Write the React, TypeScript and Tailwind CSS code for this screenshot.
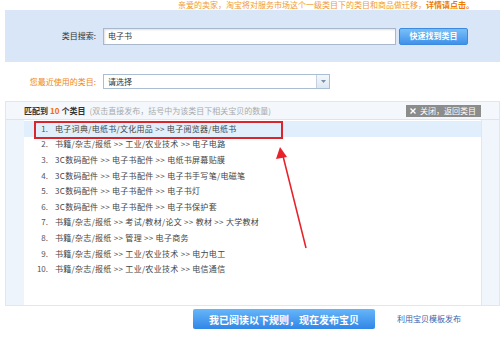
import React from "react";

const rows: string[] = [
  "电子词典/电纸书/文化用品 >> 电子阅览器/电纸书",
  "书籍/杂志/报纸 >> 工业/农业技术 >> 电子电路",
  "3C数码配件 >> 电子书配件 >> 电纸书屏幕贴膜",
  "3C数码配件 >> 电子书配件 >> 电子书手写笔/电磁笔",
  "3C数码配件 >> 电子书配件 >> 电子书灯",
  "3C数码配件 >> 电子书配件 >> 电子书保护套",
  "书籍/杂志/报纸 >> 考试/教材/论文 >> 教材 >> 大学教材",
  "书籍/杂志/报纸 >> 管理 >> 电子商务",
  "书籍/杂志/报纸 >> 工业/农业技术 >> 电力电工",
  "书籍/杂志/报纸 >> 工业/农业技术 >> 电信通信",
];

export default function App() {
  return (
    <div
      className="relative w-[500px] h-[343px] overflow-hidden bg-white text-[8px] text-[#333]"
      style={{ fontFamily: '"Noto Sans CJK SC", "Noto Sans", sans-serif' }}
    >
      {/* notice */}
      <div className="h-[10px] pl-[178px] leading-[10px] text-[#f39a2c] whitespace-nowrap">
        亲爱的卖家，淘宝将对服务市场这个一级类目下的类目和商品做迁移，
        <span className="font-bold text-[#ee7a00]">详情请点击。</span>
      </div>

      {/* search panel */}
      <div className="ml-[5px] h-[52px] bg-[#d9e6f7] flex items-center">
        <div className="w-[92px] text-right pr-[1px] text-[#333]">类目搜索:</div>
        <div className="ml-[6px] w-[293px] h-[17px] bg-white border border-[#a8b8ca] shadow-[inset_1px_1px_2px_rgba(0,0,0,0.12)] flex items-center pl-[4px]">
          电子书
        </div>
        <div className="ml-[3px] w-[69px] h-[17px] rounded-[2px] border border-[#3b8ae0] bg-gradient-to-b from-[#78bff8] to-[#3f92ea] text-white font-bold flex items-center justify-center">
          快速找到类目
        </div>
      </div>

      {/* recent */}
      <div className="mt-[12px] h-[15px] flex items-center">
        <div className="w-[97px] pr-[1px] text-right text-[#f08420]">您最近使用的类目:</div>
        <div className="ml-[6px] w-[227px] h-[15px] border border-[#a9bdd3] bg-white flex items-center pl-[4px] relative">
          请选择
          <div className="absolute right-0 top-0 w-[13px] h-[13px] border-l border-[#c3d1e0] bg-gradient-to-b from-[#f4f8fc] to-[#dde7f2] flex items-center justify-center">
            <svg width="5" height="3" viewBox="0 0 5 3">
              <path d="M0 0 L5 0 L2.5 3 Z" fill="#7a8ea5" />
            </svg>
          </div>
        </div>
      </div>

      {/* results panel */}
      <div className="mt-[12px] ml-[5px] h-[205px] border border-[#dfe7f0] flex flex-col">
        <div className="h-[18px] bg-[#f4f7fb] border-b border-[#dbe5f0] flex items-center pl-[18px] pr-[18px]">
          <span className="font-bold text-[#333]">匹配到</span>
          <span className="font-bold text-[#f36c00] ml-[2px]">10</span>
          <span className="font-bold text-[#333] ml-[2px]">个类目</span>
          <span className="text-[#aaa] ml-[4px]">(双击直接发布，括号中为该类目下相关宝贝的数量)</span>
          <div className="ml-auto w-[75px] h-[12px] bg-[#8c8c8c] text-white flex items-center pl-[4px] gap-[4px]">
            <svg width="6" height="6" viewBox="0 0 6 6">
              <path d="M0.5 0.5 L5.5 5.5 M5.5 0.5 L0.5 5.5" stroke="white" strokeWidth="1.4" />
            </svg>
            <span>关闭，返回类目</span>
          </div>
        </div>
        <div className="flex-1 flex">
          <div className="w-[18px] bg-[#eef4fc]" />
          <div className="flex-1 bg-white pt-[1px]">
            {rows.map((r, i) => (
              <div
                key={i}
                className={`flex items-center h-[15.6px] ${i === 0 ? "bg-[#e0effb]" : ""}`}
              >
                <div className="w-[24px] text-right text-[#555]">{i + 1}.</div>
                <div className="ml-[7px] text-[#444] whitespace-nowrap tracking-[0.3px]">{r}</div>
              </div>
            ))}
          </div>
          <div className="w-[18px] bg-[#f1f6fc] border-l border-[#dfe7f0]" />
        </div>
      </div>

      {/* bottom */}
      <div className="mt-[3px] flex items-center">
        <div className="ml-[193px] w-[182px] h-[20px] rounded-[2px] bg-gradient-to-b from-[#66b6fa] to-[#2f86e6] text-white font-bold text-[10px] flex items-center justify-center">
          我已阅读以下规则，现在发布宝贝
        </div>
        <div className="ml-[22px] text-[#3565b0]">利用宝贝模板发布</div>
      </div>

      {/* red highlight box */}
      <div className="absolute left-[34px] top-[121px] w-[249px] h-[18px] border-2 border-[#d9262c]" />

      {/* arrow */}
      <svg className="absolute left-0 top-0" width="500" height="343" viewBox="0 0 500 343">
        <line x1="306" y1="248" x2="283" y2="156" stroke="#e8212a" strokeWidth="1.6" />
        <path d="M280 147 L276 159 L287 157 Z" fill="#e8212a" />
      </svg>
    </div>
  );
}
